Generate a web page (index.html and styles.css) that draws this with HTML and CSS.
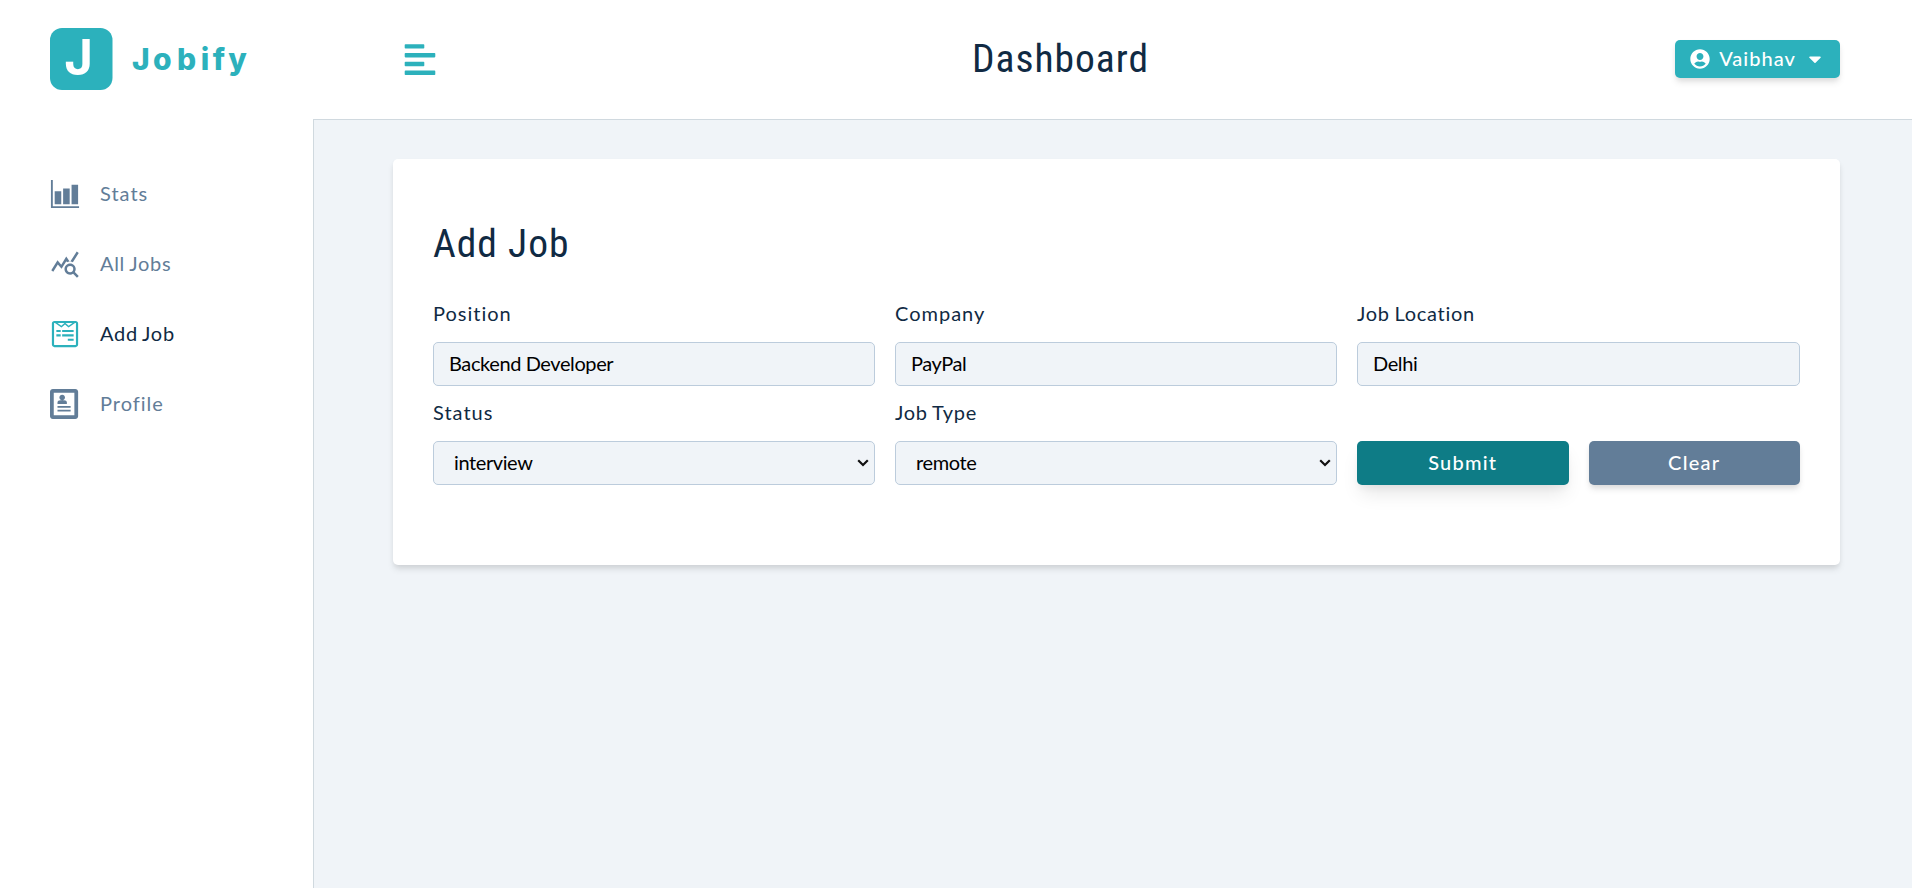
FILE: index.html
```
<!DOCTYPE html>
<html lang="en">
<head>
<meta charset="utf-8">
<title>Jobify</title>
<link rel="stylesheet" href="styles.css">
</head>
<body>
<div class="dashboard">
  <aside class="sidebar">
    <div class="logo">
      <svg width="210" height="64" viewBox="0 0 210 64" role="img" aria-label="Jobify">
        <rect width="62.500" height="62" rx="12" fill="#2cb1bc"/>
        <text class="logo-mark" x="14.300" y="47">J</text>
        <text class="logo-name" x="82 103 127 150.700 162.800 178.200" y="42.300">Jobify</text>
      </svg>
    </div>
    <nav class="links">
      <a class="link"><svg class="link-icon" viewBox="0 0 512 512"><path d="M496 496H16V16h32v448h448v32z"/><path d="M192 432H80V208h112zm144 0H224V160h112zm143.64 0H368V96h111.64z"/></svg><span>Stats</span></a>
      <a class="link"><svg class="link-icon" viewBox="0 0 24 24"><path d="M19.88 18.47c.44-.7.7-1.51.7-2.39 0-2.49-2.01-4.5-4.5-4.5s-4.5 2.01-4.5 4.5 2.01 4.5 4.49 4.5c.88 0 1.7-.26 2.39-.7L21.58 23 23 21.58l-3.12-3.11zm-3.8.11a2.5 2.5 0 0 1 0-5 2.5 2.5 0 0 1 0 5zm-.36-8.5c-.74.02-1.45.18-2.1.45l-.55-.83-3.8 6.18-3.01-3.52-3.63 5.81L1 17l5-8 3 3.5L13 6l2.72 4.08zm2.59.5c-.64-.28-1.33-.45-2.05-.49L21.38 2 23 3.18l-4.69 7.4z"/></svg><span class="tight">All Jobs</span></a>
      <a class="link active"><svg class="link-icon" viewBox="0 0 448 512"><path d="M448 75.2v361.7c0 24.3-19 43.2-43.2 43.2H43.2C19.3 480 0 461.4 0 436.8V75.2C0 51.1 18.8 32 43.2 32h361.7c24 0 43.1 18.8 43.1 43.2zm-37.3 361.6V75.2c0-3-2.6-5.8-5.8-5.8h-9.3L285.3 144 224 94.1 162.8 144 52.5 69.3h-9.3c-3.2 0-5.8 2.8-5.8 5.8v361.7c0 3 2.6 5.8 5.8 5.8h361.7c3.2.1 5.8-2.7 5.8-5.8zM150.2 186v37H76.7v-37h73.5zm0 74.4v37.3H76.7v-37.3h73.5zm11.1-147.3l54-43.7H96.8l64.5 43.7zm210 72.9v37h-196v-37h196zm0 74.4v37.3h-196v-37.3h196zm-84.6-147.3l64.5-43.7H232.8l53.9 43.7zM371.3 335v37.3h-99.4V335h99.4z"/></svg><span class="tight">Add Job</span></a>
      <a class="link"><svg class="link-icon" viewBox="0 0 16 16"><path fill-rule="evenodd" d="M13.5 0h-12C.675 0 0 .675 0 1.5v13c0 .825.675 1.5 1.5 1.5h12c.825 0 1.5-.675 1.5-1.5v-13c0-.825-.675-1.5-1.5-1.5zM13 14H2V2h11v12z"/><path d="M4 9h7v1H4zM4 11h7v1H4zM5 4.5C5 3.672 5.672 3 6.500 3S8 3.672 8 4.500 7.328 6 6.500 6 5 5.328 5 4.500zM7.500 6h-2C4.675 6 4 6.450 4 7v1h5V7c0-.550-.675-1-1.500-1z"/></svg><span>Profile</span></a>
    </nav>
  </aside>
  <div class="main">
    <header class="navbar">
      <svg class="toggle" width="32" height="32" viewBox="0 0 32 32"><path d="M1.500 0.200h18a.8.8 0 0 1 .8.8v2.800a.8.8 0 0 1-.8.8h-18a.8.8 0 0 1-.8-.8V1a.8.8 0 0 1 .8-.8zM1.500 9h29a.8.8 0 0 1 .8.8v2.800a.8.8 0 0 1-.8.8h-29a.8.8 0 0 1-.8-.8V9.800a.8.8 0 0 1 .8-.8zM1.500 17.800h18a.8.8 0 0 1 .8.8v2.800a.8.8 0 0 1-.8.8h-18a.8.8 0 0 1-.8-.8v-2.800a.8.8 0 0 1 .8-.8zM1.500 26.600h29a.8.8 0 0 1 .8.8v2.800a.8.8 0 0 1-.8.8h-29a.8.8 0 0 1-.8-.8v-2.800a.8.8 0 0 1 .8-.8z"/></svg>
      <h1 class="heading page-title">Dashboard</h1>
      <button class="btn user-btn" type="button">
        <svg width="20" height="20" viewBox="0 0 496 512"><path d="M248 8C111 8 0 119 0 256s111 248 248 248 248-111 248-248S385 8 248 8zm0 96c48.600 0 88 39.400 88 88s-39.400 88-88 88-88-39.400-88-88 39.400-88 88-88zm0 344c-58.700 0-111.300-26.600-146.500-68.200 18.800-35.400 55.600-59.800 98.500-59.800 2.400 0 4.800.4 7.100 1.100 13 4.200 26.600 6.900 40.900 6.900 14.300 0 28-2.700 40.900-6.900 2.300-.7 4.700-1.100 7.100-1.100 42.900 0 79.700 24.400 98.500 59.800C359.300 421.400 306.700 448 248 448z"/></svg>
        <span class="user-name">Vaibhav</span>
        <svg width="20" height="20" viewBox="0 0 320 512"><path d="M31.300 192h257.300c17.800 0 26.700 21.500 14.100 34.100L174.100 354.800c-7.800 7.800-20.500 7.800-28.300 0L17.200 226.100C4.600 213.500 13.500 192 31.300 192z"/></svg>
      </button>
    </header>
    <main class="content">
      <form class="card">
        <h2 class="heading card-title">Add Job</h2>
        <div class="grid">
          <div class="field"><label class="label" for="position">Position</label><input class="control" id="position" type="text" value="Backend Developer"></div>
          <div class="field"><label class="label" for="company">Company</label><input class="control" id="company" type="text" value="PayPal"></div>
          <div class="field"><label class="label tight" for="location">Job Location</label><input class="control" id="location" type="text" value="Delhi"></div>
          <div class="field"><label class="label" for="status">Status</label><div class="select-wrap"><select class="control select" id="status"><option>interview</option></select><svg class="chevron" width="12" height="8" viewBox="0 0 12 8"><path d="M1.200 1.200 6 6l4.800-4.800"/></svg></div></div>
          <div class="field"><label class="label tight" for="type">Job Type</label><div class="select-wrap"><select class="control select" id="type"><option>remote</option></select><svg class="chevron" width="12" height="8" viewBox="0 0 12 8"><path d="M1.200 1.200 6 6l4.800-4.800"/></svg></div></div>
          <div class="actions"><button class="btn submit" type="button">Submit</button><button class="btn clear" type="button">Clear</button></div>
        </div>
      </form>
    </main>
  </div>
</div>
</body>
</html>
```
FILE: styles.css
```
* { box-sizing: border-box; margin: 0; }
body { background: #f0f4f8; color: #102a43; font-family: Lato, "Noto Sans", sans-serif; font-size: 20px; line-height: 30px; }
.dashboard { display: grid; grid-template-columns: 313px 1fr; height: 888px; overflow: hidden; }
.sidebar { background: #fff; }
.logo { height: 119px; padding: 28px 0 0 50px; }
.logo svg { display: block; }
.logo-mark, .logo-name { font-family: Inter, sans-serif; font-weight: 700; }
.logo-mark { fill: #fff; font-size: 49px; }
.logo-name { fill: #2cb1bc; font-size: 30px; font-weight: 800; }
.links { padding-top: 40px; }
.link { display: flex; align-items: center; gap: 20px; height: 70px; padding-left: 50px; color: #627d98; letter-spacing: 1px; }
.link span { padding-bottom: 2px; }
.link-icon { width: 30px; height: 30px; fill: currentColor; }
.active { color: #102a43; }
.active .link-icon { fill: #2cb1bc; }
.main { display: flex; flex-direction: column; }
.navbar { display: flex; align-items: center; height: 120px; padding: 0 72px 1px 90px; background: #fff; border-bottom: 1px solid #d0d9df; }
.toggle { margin: 1px 0 0 0.500px; fill: #2cb1bc; }
.heading { font-family: "Roboto Condensed", Roboto, sans-serif; font-weight: 400; font-size: 39.500px; line-height: 52px; letter-spacing: 1px; }
.page-title { margin: 0 auto 1px 536.500px; }
.btn { display: flex; align-items: center; justify-content: center; border: 0; border-radius: 5px; color: #fff; font: inherit; font-weight: 500; letter-spacing: 1.250px; box-shadow: 0 5px 7.500px -1px rgba(0,0,0,.1), 0 2.500px 5px -1px rgba(0,0,0,.06); }
.btn svg { fill: #fff; }
.user-btn { width: 165px; height: 38px; padding: 0; gap: 9px; background: #2cb1bc; letter-spacing: 1px; }
.user-name { padding-bottom: 2px; }
.content { flex: 1; padding: 39px 72px 0 79px; border-left: 1px solid #d0d9df; }
.card { height: 406px; padding: 59px 40px 0; border-radius: 5px; background: #fff; box-shadow: 0 5px 7.500px -1px rgba(0,0,0,.1), 0 2.500px 5px -1px rgba(0,0,0,.06); }
.grid { display: grid; grid-template-columns: 442px 442px 1fr; column-gap: 20px; row-gap: 11px; margin-top: 28px; }
.field { display: flex; flex-direction: column; height: 88px; justify-content: space-between; }
.label { line-height: 30px; letter-spacing: 1px; }
.tight { letter-spacing: 0.700px; word-spacing: -1px; }
.control { display: block; width: 100%; height: 44px; padding: 0 15px 2px; border: 1px solid #bcccdc; border-radius: 5px; background: #f0f4f8; color: #000; font: inherit; letter-spacing: -0.400px; }
.select-wrap { position: relative; }
.select { appearance: none; padding-left: 20px; }
.chevron { position: absolute; right: 6px; top: 18px; fill: none; stroke: #111; stroke-width: 2.200px; }
.actions { display: grid; grid-template-columns: 1fr 1fr; gap: 20px; align-items: end; }
.actions .btn { height: 44px; padding: 0 0 2px; }
.submit { background: #0e7c86; box-shadow: 0 12px 19px -4px rgba(0,0,0,.1), 0 5px 7.500px -2.500px rgba(0,0,0,.05); }
.clear { background: #627d98; }
```
